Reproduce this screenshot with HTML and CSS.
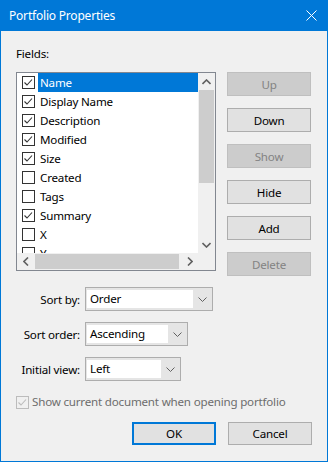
FILE: index.html
```html
<!DOCTYPE html>
<html lang="en">
<head>
    <meta charset="UTF-8">
    <meta name="viewport" content="width=device-width, initial-scale=1.0">
    <title>Portfolio Properties</title>
    <link rel="stylesheet" href="styles.css">
</head>
<body>
<div class="window">
    <div class="titlebar">
        <span class="title">Portfolio Properties</span>
        <svg class="close" width="11" height="11" viewBox="0 0 11 11"><path d="M0.5 0.5 L10.5 10.5 M10.5 0.5 L0.5 10.5"/></svg>
    </div>

    <div class="content">
        <div class="fields-label">Fields:</div>

        <div class="fields-row">
            <div class="listbox">
                <div class="list">
                    <div class="item"><span class="check"><svg viewBox="0 0 13 13"><path d="M2.5 6.5 L5 9 L10 3.5"/></svg></span><span class="text selected">Name</span></div>
                    <div class="item"><span class="check"><svg viewBox="0 0 13 13"><path d="M2.5 6.5 L5 9 L10 3.5"/></svg></span><span class="text">Display Name</span></div>
                    <div class="item"><span class="check"><svg viewBox="0 0 13 13"><path d="M2.5 6.5 L5 9 L10 3.5"/></svg></span><span class="text">Description</span></div>
                    <div class="item"><span class="check"><svg viewBox="0 0 13 13"><path d="M2.5 6.5 L5 9 L10 3.5"/></svg></span><span class="text">Modified</span></div>
                    <div class="item"><span class="check"><svg viewBox="0 0 13 13"><path d="M2.5 6.5 L5 9 L10 3.5"/></svg></span><span class="text">Size</span></div>
                    <div class="item"><span class="check"></span><span class="text">Created</span></div>
                    <div class="item"><span class="check"></span><span class="text">Tags</span></div>
                    <div class="item"><span class="check"><svg viewBox="0 0 13 13"><path d="M2.5 6.5 L5 9 L10 3.5"/></svg></span><span class="text">Summary</span></div>
                    <div class="item"><span class="check"></span><span class="text">X</span></div>
                    <div class="item"><span class="check"></span><span class="text">Y</span></div>
                </div>
                <div class="vscroll">
                    <div class="arrow"><svg width="9" height="6" viewBox="0 0 9 6"><path d="M0.5 5 L4.5 1 L8.5 5"/></svg></div>
                    <div class="vthumb"></div>
                    <div class="track"></div>
                    <div class="arrow"><svg width="9" height="6" viewBox="0 0 9 6"><path d="M0.5 1 L4.5 5 L8.5 1"/></svg></div>
                </div>
                <div class="hscroll">
                    <div class="arrow"><svg width="6" height="9" viewBox="0 0 6 9"><path d="M5 0.5 L1 4.5 L5 8.5"/></svg></div>
                    <div class="hthumb"></div>
                    <div class="track"></div>
                    <div class="arrow"><svg width="6" height="9" viewBox="0 0 6 9"><path d="M1 0.5 L5 4.5 L1 8.5"/></svg></div>
                </div>
                <div class="corner"></div>
            </div>

            <div class="side-buttons">
                <button class="btn" disabled>Up</button>
                <button class="btn">Down</button>
                <button class="btn" disabled>Show</button>
                <button class="btn">Hide</button>
                <button class="btn">Add</button>
                <button class="btn" disabled>Delete</button>
            </div>
        </div>

        <div class="sort-rows">
            <div class="sort-row">
                <span class="sort-label">Sort by:</span>
                <div class="combo combo-wide"><span class="combo-value">Order</span><span class="combo-arrow"><svg width="9" height="5" viewBox="0 0 9 5"><path d="M0.5 0.5 L4.5 4.5 L8.5 0.5"/></svg></span></div>
            </div>
            <div class="sort-row">
                <span class="sort-label">Sort order:</span>
                <div class="combo combo-mid"><span class="combo-value">Ascending</span><span class="combo-arrow"><svg width="9" height="5" viewBox="0 0 9 5"><path d="M0.5 0.5 L4.5 4.5 L8.5 0.5"/></svg></span></div>
            </div>
            <div class="sort-row">
                <span class="sort-label">Initial view:</span>
                <div class="combo combo-small"><span class="combo-value">Left</span><span class="combo-arrow"><svg width="9" height="5" viewBox="0 0 9 5"><path d="M0.5 0.5 L4.5 4.5 L8.5 0.5"/></svg></span></div>
            </div>
        </div>

        <div class="show-current">
            <span class="check disabled"><svg viewBox="0 0 13 13"><path d="M2.5 6.5 L5 9 L10 3.5"/></svg></span>
            <span>Show current document when opening portfolio</span>
        </div>

        <div class="footer">
            <button class="btn btn-default">OK</button>
            <button class="btn">Cancel</button>
        </div>
    </div>
</div>
</body>
</html>
```

FILE: styles.css
```css
body { margin: 0; font-family: "Noto Sans", sans-serif; font-size: 11.6px; letter-spacing: -0.2px; color: #000; }

.window {
    width: 328px;
    height: 462px;
    box-sizing: border-box;
    border: 1px solid #0078d7;
    border-top: none;
    background-color: #f0f0f0;
}

.titlebar {
    height: 31px;
    background-color: #0078d7;
    color: #fff;
    display: flex;
    align-items: center;
    justify-content: space-between;
    padding: 0 10px 0 8px;
    font-size: 12px;
}
.close { fill: none; stroke: #fff; stroke-width: 1; }

.content { padding: 0 15px 0 15px; }

.fields-label { margin-top: 15px; line-height: 16px; margin-bottom: 10px; }

.fields-row { display: flex; gap: 11px; align-items: flex-start; }

.listbox {
    display: grid;
    grid-template-columns: 181px 17px;
    grid-template-rows: 180px 17px;
    border: 1px solid #828790;
    background-color: #fff;
}
.list { overflow: hidden; background-color: #fff; }
.item { display: flex; align-items: center; height: 19px; padding-left: 5px; white-space: nowrap; }
.item .text { margin-left: 3px; padding: 0 2px; line-height: 19px; }
.item .text.selected { background-color: #0078d7; color: #fff; flex: 1; }

.check {
    width: 13px;
    height: 13px;
    box-sizing: border-box;
    border: 1px solid #333;
    background-color: #fff;
    flex: none;
    position: relative;
}
.check svg { position: absolute; left: -1px; top: -1px; width: 13px; height: 13px; fill: none; stroke: #333; stroke-width: 1.1; }
.check.disabled { border-color: #bcbcbc; background-color: #f0f0f0; }
.check.disabled svg { stroke: #bcbcbc; }

.vscroll { display: flex; flex-direction: column; background-color: #f0f0f0; }
.hscroll { display: flex; background-color: #f0f0f0; }
.corner { background-color: #f0f0f0; }
.arrow { width: 17px; height: 17px; display: flex; align-items: center; justify-content: center; flex: none; }
.arrow svg { fill: none; stroke: #606060; stroke-width: 1.6; }
.track { flex: 1; }
.vthumb { height: 93px; margin: 0 1px; background-color: #cdcdcd; }
.hthumb { width: 144px; margin: 1px 0 1px 1px; background-color: #cdcdcd; }

.side-buttons { display: flex; flex-direction: column; gap: 12px; }

.btn {
    width: 84px;
    height: 24px;
    box-sizing: border-box;
    border: 1px solid #adadad;
    background-color: #e1e1e1;
    font-family: "Noto Sans", sans-serif;
    font-size: 11.6px;
    letter-spacing: -0.2px;
    color: #000;
    padding: 0;
}
.btn:disabled { background-color: #cccccc; border-color: #bfbfbf; color: #838383; }
.btn-default { border: 2px solid #0078d7; }

.sort-rows { margin-top: 11px; display: flex; flex-direction: column; gap: 11px; }
.sort-row { display: flex; align-items: center; gap: 5px; }
.sort-label { width: 64px; text-align: right; }

.combo {
    height: 24px;
    box-sizing: border-box;
    border: 1px solid #adadad;
    background-color: #e5e5e5;
    display: flex;
    padding: 2px 0 2px 1px;
}
.combo-wide { width: 128px; }
.combo-mid { width: 103px; }
.combo-small { width: 96px; }
.combo-value { flex: 1; background-color: #fff; padding-left: 3px; line-height: 18px; }
.combo-arrow { width: 19px; display: flex; align-items: center; justify-content: center; }
.combo-arrow svg { fill: none; stroke: #606060; stroke-width: 1; }

.show-current { display: flex; align-items: center; gap: 3px; margin-top: 13px; color: #6d6d6d; line-height: 16px; }

.footer { display: flex; justify-content: flex-end; gap: 12px; margin-top: 12px; }
.footer .btn { height: 23px; }
```
